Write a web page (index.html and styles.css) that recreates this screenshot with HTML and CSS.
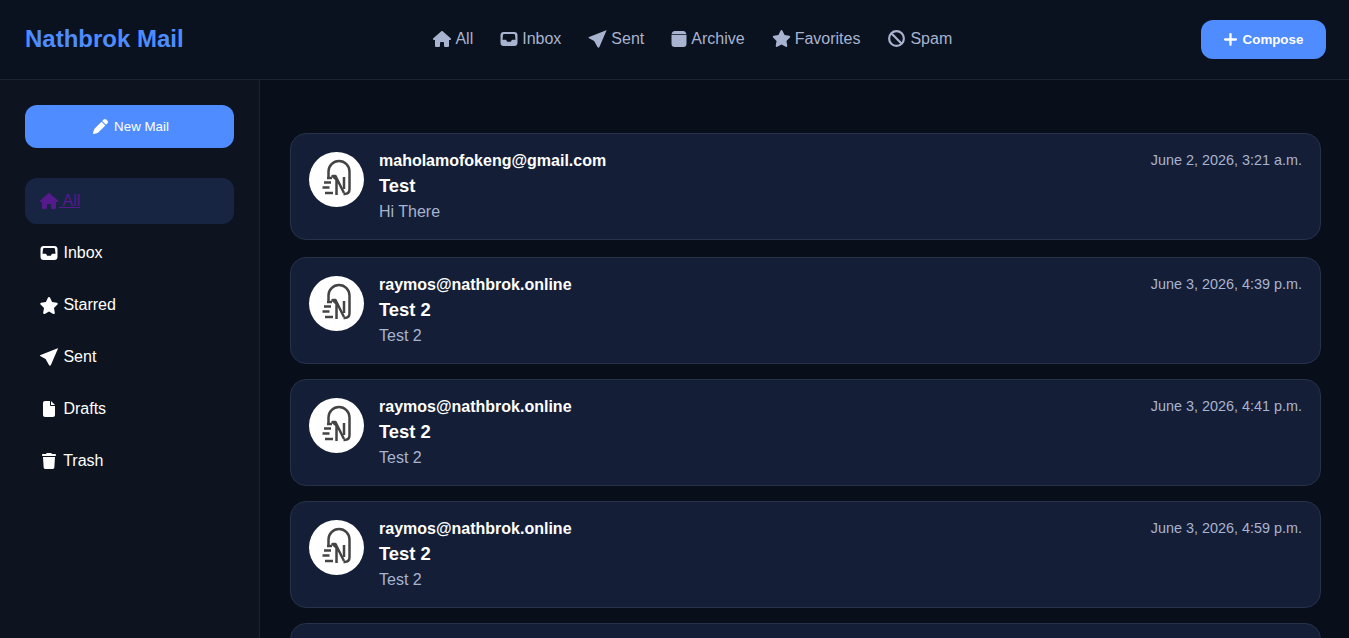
FILE: index.html
```html
<!DOCTYPE html>
<html lang="en">
<head>
  <meta charset="UTF-8" />
  <meta name="viewport" content="width=device-width, initial-scale=1.0"/>
  <title>Nathbrok Mail</title>
  <link rel="stylesheet" href="styles.css">
</head>
<body>

  <!-- icon set -->
  <svg class="icon-defs" xmlns="http://www.w3.org/2000/svg">
    <symbol id="i-house" viewBox="0 0 576 512"><path d="M575.8 255.5c0 18-15 32.1-32 32.1h-32l.7 160.2c0 2.7-.2 5.4-.5 8.1V472c0 22.1-17.9 40-40 40H456c-1.1 0-2.2 0-3.3-.1c-1.4 .1-2.8 .1-4.2 .1H416 392c-22.1 0-40-17.9-40-40V448 384c0-17.7-14.3-32-32-32H256c-17.7 0-32 14.3-32 32v64 24c0 22.1-17.9 40-40 40H160 128.1c-1.5 0-3-.1-4.5-.2c-1.2 .1-2.4 .2-3.6 .2H104c-22.1 0-40-17.9-40-40V360c0-.9 0-1.9 .1-2.8V287.6H32c-18 0-32-14-32-32.1c0-9 3-17 10-24L266.4 8c7-7 15-8 22-8s15 2 21 7L564.8 231.5c8 7 12 15 11 24z"/></symbol>
    <symbol id="i-inbox" viewBox="0 0 17 14"><path fill-rule="evenodd" d="M3 0H14c1.700 0 3 1.300 3 3V11c0 1.700-1.300 3-3 3H3c-1.700 0-3-1.300-3-3V3C0 1.300 1.300 0 3 0zM3.600 2c-.6 0-1 .4-1.100 1L2 7.800H5c.5 0 .8.2 1 .6l.6 1.400h3.800l.6-1.400c.2-.4.5-.6 1-.6h3L14.500 3c-.1-.6-.5-1-1.100-1H3.600z"/></symbol>
    <symbol id="i-plane" viewBox="0 0 18 18"><path d="M17.800.2L.6 6.900c-.8.3-.8 1 0 1.300L5.600 11l3.400 5.900c.5 1 1.500 1 1.900 0L18 .6c.1-.3 0-.5-.2-.4z"/></symbol>
    <symbol id="i-archive" viewBox="0 0 15 16"><path d="M3.500 0H11.500C13.300 0 14.600 1.200 15 3.300H0C.4 1.200 1.700 0 3.500 0zM0 4H15V13C15 14.700 13.700 16 12 16H3C1.300 16 0 14.700 0 13V4z"/></symbol>
    <symbol id="i-star" viewBox="0 0 576 512"><path d="M316.9 18C311.6 7 300.4 0 288.1 0s-23.4 7-28.8 18L195 150.3 51.4 171.5c-12 1.8-22 10.2-25.7 21.7s-.7 24.2 7.9 32.7L137.8 329 113.2 474.7c-2 12 3 24.2 12.9 31.3s23 8 33.8 2.3l128.3-68.5 128.3 68.5c10.8 5.7 23.9 4.9 33.8-2.3s14.9-19.3 12.9-31.3L438.5 329 542.7 225.9c8.6-8.5 11.7-21.2 7.9-32.7s-13.7-19.9-25.7-21.7L381.2 150.3 316.9 18z"/></symbol>
    <symbol id="i-ban" viewBox="0 0 512 512"><circle cx="256" cy="256" r="222" fill="none" stroke="currentColor" stroke-width="66"/><path d="M100 100L412 412" fill="none" stroke="currentColor" stroke-width="66"/></symbol>
    <symbol id="i-pen" viewBox="0 0 512 512"><path d="M362.7 19.3L314.3 67.7 444.3 197.7l48.4-48.4c25-25 25-65.5 0-90.5L453.3 19.3c-25-25-65.5-25-90.5 0zm-71 71L58.6 323.5c-10.4 10.4-18 23.3-22.2 37.4L1 481.2C-1.5 489.7 .8 498.8 7 505s15.3 8.5 23.7 6.1l120.3-35.4c14.1-4.2 27-11.8 37.4-22.2L421.7 220.3 291.7 90.3z"/></symbol>
    <symbol id="i-plus" viewBox="0 0 448 448"><path d="M264 40c0-22-18-40-40-40s-40 18-40 40V184H40c-22 0-40 18-40 40s18 40 40 40H184V408c0 22 18 40 40 40s40-18 40-40V264H408c22 0 40-18 40-40s-18-40-40-40H264V40z"/></symbol>
    <symbol id="i-file" viewBox="0 0 384 512"><path d="M0 64C0 28.7 28.7 0 64 0H224V128c0 17.7 14.3 32 32 32H384V448c0 35.3-28.7 64-64 64H64c-35.3 0-64-28.7-64-64V64zm384 64H256V0L384 128z"/></symbol>
    <symbol id="i-trash" viewBox="0 0 448 512"><path d="M135.2 17.7L128 32H32C14.3 32 0 46.3 0 64S14.3 96 32 96H416c17.7 0 32-14.3 32-32s-14.3-32-32-32H320l-7.2-14.3C307.4 6.8 296.3 0 284.2 0H163.8c-12.1 0-23.2 6.8-28.6 17.7zM416 128H32L53.2 467c1.6 25.3 22.6 45 47.9 45H346.9c25.3 0 46.3-19.7 47.9-45L416 128z"/></symbol>
    <symbol id="i-logo" viewBox="0 0 55 55">
      <g fill="none" stroke="#444" stroke-width="2.500" stroke-linejoin="round">
        <path d="M19.500 25V19.500a10.500 10.500 0 0 1 21 0V37q0 5-5 5h-1"/>
        <path d="M27.500 43V27.500L23.500 24h3L35 41"/>
        <path d="M35 37V25"/>
        <path d="M18 26h5M15 30.500h7M13.500 35.500h7M16 41h8"/>
      </g>
    </symbol>
  </svg>

  <header class="topbar">
    <div class="brand">Nathbrok Mail</div>
    <nav class="topnav">
      <a href="#"><svg class="ico w18"><use href="#i-house"/></svg>All</a>
      <a href="#"><svg class="ico w18 short"><use href="#i-inbox"/></svg>Inbox</a>
      <a href="#"><svg class="ico w19 tall"><use href="#i-plane"/></svg>Sent</a>
      <a href="#"><svg class="ico w16"><use href="#i-archive"/></svg>Archive</a>
      <a href="#"><svg class="ico w19 big"><use href="#i-star"/></svg>Favorites</a>
      <a href="#"><svg class="ico w19 big"><use href="#i-ban"/></svg>Spam</a>
    </nav>
    <button class="compose-btn"><svg class="ico-sm"><use href="#i-plus"/></svg>Compose</button>
  </header>

  <div class="layout">
    <aside class="sidebar">
      <button class="new-mail-btn"><svg class="ico-sm"><use href="#i-pen"/></svg>New Mail</button>
      <ul class="side-list">
        <li class="active"><a href="#"><svg class="ico"><use href="#i-house"/></svg> All</a></li>
        <li><a href="#"><svg class="ico short"><use href="#i-inbox"/></svg> Inbox</a></li>
        <li><a href="#"><svg class="ico big"><use href="#i-star"/></svg> Starred</a></li>
        <li><a href="#"><svg class="ico tall"><use href="#i-plane"/></svg> Sent</a></li>
        <li><a href="#"><svg class="ico"><use href="#i-file"/></svg> Drafts</a></li>
        <li><a href="#"><svg class="ico"><use href="#i-trash"/></svg> Trash</a></li>
      </ul>
    </aside>

    <main class="mail-list">
      <article class="mail-card first">
        <svg class="avatar"><use href="#i-logo"/></svg>
        <div class="mail-body">
          <div class="mail-from">maholamofokeng@gmail.com</div>
          <div class="mail-subject">Test</div>
          <div class="mail-preview">Hi There</div>
        </div>
        <time class="mail-date">June 2, 2026, 3:21 a.m.</time>
      </article>
      <article class="mail-card">
        <svg class="avatar"><use href="#i-logo"/></svg>
        <div class="mail-body">
          <div class="mail-from">raymos@nathbrok.online</div>
          <div class="mail-subject">Test 2</div>
          <div class="mail-preview">Test 2</div>
        </div>
        <time class="mail-date">June 3, 2026, 4:39 p.m.</time>
      </article>
      <article class="mail-card">
        <svg class="avatar"><use href="#i-logo"/></svg>
        <div class="mail-body">
          <div class="mail-from">raymos@nathbrok.online</div>
          <div class="mail-subject">Test 2</div>
          <div class="mail-preview">Test 2</div>
        </div>
        <time class="mail-date">June 3, 2026, 4:41 p.m.</time>
      </article>
      <article class="mail-card">
        <svg class="avatar"><use href="#i-logo"/></svg>
        <div class="mail-body">
          <div class="mail-from">raymos@nathbrok.online</div>
          <div class="mail-subject">Test 2</div>
          <div class="mail-preview">Test 2</div>
        </div>
        <time class="mail-date">June 3, 2026, 4:59 p.m.</time>
      </article>
      <!-- only the top edge of this one is on screen -->
      <article class="mail-card"></article>
    </main>
  </div>

</body>
</html>
```

FILE: styles.css
```css
:root {
  --blue: #4f8cff;
  --muted: #a8b3cf;
  --line: #1c2433;
}

* {
  box-sizing: border-box;
  font-family: 'Liberation Sans', Arial, sans-serif;
}

html, body {
  margin: 0;
  height: 100%;
  overflow: hidden;
}

body {
  display: flex;
  flex-direction: column;
  background: #080f1b;
  color: #fff;
}

.icon-defs {
  display: none;
}

.topbar {
  flex: none;
  height: 80px;
  display: flex;
  align-items: center;
  justify-content: space-between;
  padding: 0 23px 2px 25px;
  background: #0a121f;
  border-bottom: 1px solid var(--line);
}

.brand {
  font-size: 24px;
  font-weight: 700;
  color: var(--blue);
}

.topnav {
  display: flex;
  gap: 27px;
  margin-left: 1px;
}

.topnav a {
  display: flex;
  align-items: center;
  gap: 4px;
  font-size: 16px;
  color: var(--muted);
  text-decoration: none;
}

.ico {
  flex: none;
  width: 20px;
  height: 16px;
  fill: currentColor;
  color: inherit;
}

.ico.tall {
  height: 18px;
}

.ico.big {
  height: 17px;
}

.ico.short {
  height: 14px;
}

.ico.w16 { width: 16px; }
.ico.w18 { width: 18px; }
.ico.w19 { width: 19px; }

.ico-sm {
  width: 14px;
  height: 14px;
  fill: #fff;
}

.compose-btn,
.new-mail-btn {
  display: flex;
  align-items: center;
  justify-content: center;
  gap: 6px;
  border: none;
  border-radius: 12px;
  background: var(--blue);
  color: #fff;
  cursor: pointer;
}

.compose-btn {
  width: 125px;
  height: 39px;
  margin-top: 2px;
  font-size: 13.333px;
  font-weight: 700;
}

.compose-btn .ico-sm {
  width: 13px;
  height: 13px;
}

.new-mail-btn {
  width: 100%;
  height: 43px;
  padding-left: 9px;
  font-size: 13.333px;
}

.new-mail-btn .ico-sm {
  width: 15px;
  height: 15px;
}

.layout {
  flex: 1;
  display: flex;
  min-height: 0;
}

.sidebar {
  flex: none;
  width: 260px;
  padding: 25px;
  background: #0d1420;
  border-right: 1px solid var(--line);
}

.side-list {
  list-style: none;
  margin: 30px 0 0;
  padding: 0;
  display: flex;
  flex-direction: column;
  gap: 6px;
}

.side-list li {
  height: 46px;
  display: flex;
  align-items: center;
  padding: 0 14px;
  border-radius: 12px;
}

.side-list a {
  display: flex;
  align-items: center;
  font-size: 16px;
  color: #fff;
  text-decoration: none;
  white-space: pre;
}

.side-list .active {
  background: #172542;
}

.side-list .active a {
  color: #551a8b;
  text-decoration: underline;
}

.mail-list {
  flex: 1;
  min-width: 0;
  padding: 53px 28px 0 30px;
  display: flex;
  flex-direction: column;
  gap: 15px;
}

.mail-card {
  flex: none;
  height: 107px;
  display: flex;
  align-items: flex-start;
  gap: 15px;
  padding: 18px 18px 0;
  background: #141f37;
  border: 1px solid #26314a;
  border-radius: 16px;
}

.mail-card.first {
  margin-bottom: 2px;
}

.avatar {
  flex: none;
  width: 55px;
  height: 55px;
  border-radius: 50%;
  background: #fff;
}

.mail-body {
  flex: 1;
  min-width: 0;
}

.mail-from {
  font-size: 16px;
  font-weight: 700;
  line-height: 18px;
}

.mail-subject {
  margin-top: 5px;
  font-size: 18.4px;
  font-weight: 700;
  line-height: 21px;
}

.mail-preview {
  margin-top: 6px;
  font-size: 16px;
  line-height: 20px;
  color: var(--muted);
}

.mail-date {
  font-size: 14.4px;
  line-height: 17px;
  color: var(--muted);
}
```
